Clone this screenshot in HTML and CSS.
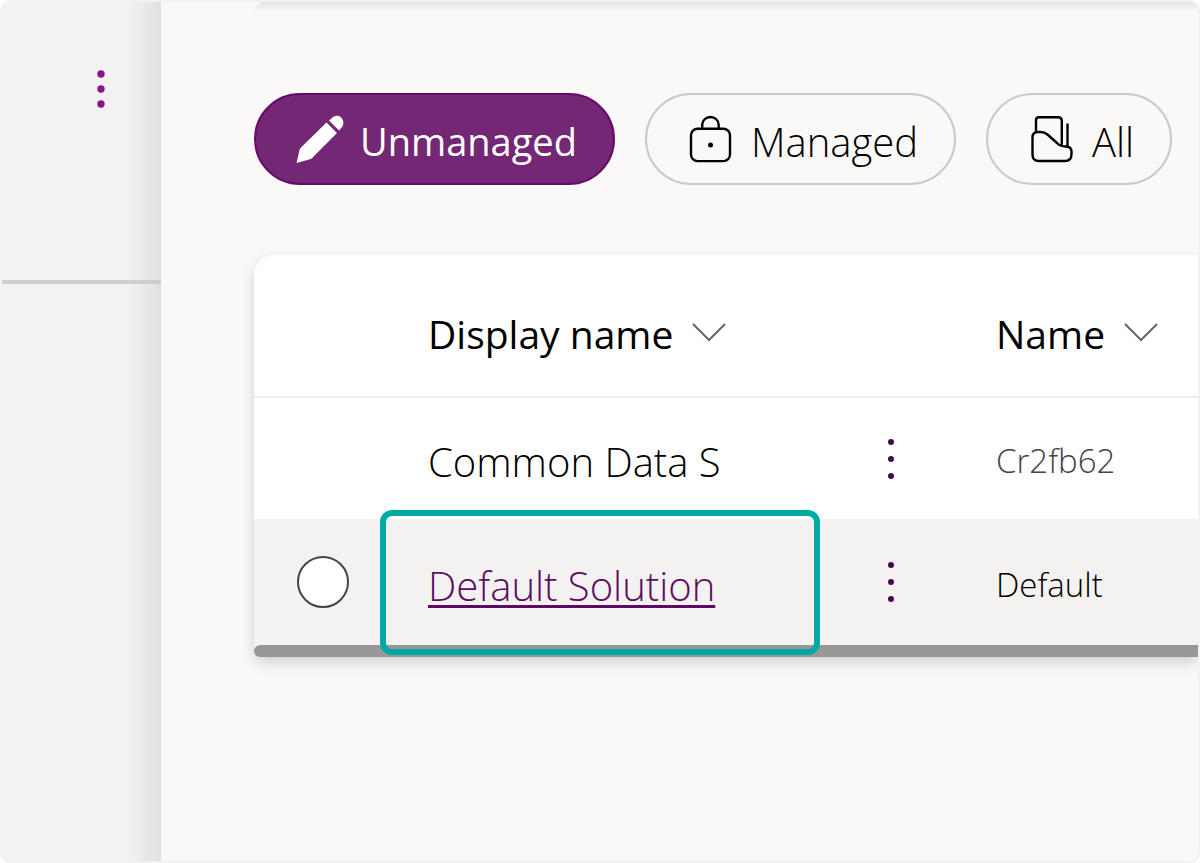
FILE: index.html
```html
<!DOCTYPE html>
<html lang="en">
<head>
<meta charset="utf-8">
<meta name="viewport" content="width=device-width, initial-scale=1">
<title>Solutions</title>
<link rel="stylesheet" href="styles.css">
</head>
<body>
<div class="frame">
  <aside class="sidebar">
    <div class="sidebar-top">
      <button class="icon-button sidebar-more" type="button" aria-label="More">
        <svg class="dots-icon" width="8" height="38" viewBox="0 0 8 38"><circle cx="4" cy="4" r="3.700"/><circle cx="4" cy="19" r="3.700"/><circle cx="4" cy="34" r="3.700"/></svg>
      </button>
    </div>
  </aside>
  <main class="content">
    <div class="toolbar-shadow"></div>
    <div class="filters">
      <button class="pill pill-active" type="button" aria-pressed="true">
        <svg class="pill-icon" width="48" height="48" viewBox="0 0 48 48" fill="#fff"><path d="M35.500 3.500C38 .300 42.500 0 45.200 2.600C48 5.400 48.200 10 45.300 13L43 15.500L33 5.500Z"/><path d="M30.500 7.500L41 18L19 40C17.500 41.500 16.500 43.500 14 44.300L.500 48L3.500 35C4 33.500 5 32.500 6 31.500Z"/></svg>
        <span class="pill-label">Unmanaged</span>
      </button>
      <button class="pill" type="button" aria-pressed="false">
        <svg class="pill-icon" width="48" height="48" viewBox="0 0 48 48" fill="none" stroke="#000" stroke-width="2.400"><rect x="4" y="13.800" width="39" height="32.300" rx="6.500"/><path d="M15.200 13.800V9.800A8.200 7.800 0 0 1 31.700 9.800V13.800"/><circle cx="23.500" cy="30" r="2.500" fill="#000" stroke="none"/></svg>
        <span class="pill-label">Managed</span>
      </button>
      <button class="pill" type="button" aria-pressed="false">
        <svg class="pill-icon" width="48" height="48" viewBox="0 0 48 48" fill="none" stroke="#000" stroke-width="2.400" stroke-linejoin="round"><path d="M8 17V5Q8 2.300 11 2.300H30Q33.800 2.300 33.800 6V31"/><path d="M39.500 8.500V31.500"/><path d="M4.500 22.500Q4.500 17 10 17H12.500Q16.500 17 19.500 19.500L29 28Q32.500 31.500 37.500 31.500Q43.500 31.500 43.500 36.500V39Q43.500 46 37 46H11Q4.500 46 4.500 39.500Z"/></svg>
        <span class="pill-label">All</span>
      </button>
    </div>
    <section class="card">
      <table class="solutions">
        <colgroup><col class="col-select"><col class="col-display"><col class="col-more"><col></colgroup>
        <thead>
          <tr>
            <td></td>
            <th scope="col"><button class="sort" type="button">Display name<svg width="34" height="28" viewBox="0 0 34 28"><path d="M1 4L17 20L33 4"/></svg></button></th>
            <td></td>
            <th class="name-cell" scope="col"><button class="sort" type="button">Name<svg width="34" height="28" viewBox="0 0 34 28"><path d="M1 4L17 20L33 4"/></svg></button></th>
          </tr>
        </thead>
        <tbody>
          <tr class="row">
            <td></td>
            <td class="display-name">Common Data S</td>
            <td class="more-cell"><button class="icon-button" type="button" aria-label="More commands"><svg class="dots-icon" width="8" height="42" viewBox="0 0 8 42"><circle cx="4" cy="4" r="3"/><circle cx="4" cy="21" r="3"/><circle cx="4" cy="38" r="3"/></svg></button></td>
            <td class="name-cell muted">Cr2fb62</td>
          </tr>
          <tr class="row row-hover">
            <td class="select-cell"><input class="radio" type="radio" name="solution" aria-label="Select Default Solution"></td>
            <td class="display-name highlighted"><a class="solution-link" href="#default">Default Solution</a><span class="highlight"></span></td>
            <td class="more-cell"><button class="icon-button" type="button" aria-label="More commands"><svg class="dots-icon" width="8" height="42" viewBox="0 0 8 42"><circle cx="4" cy="4" r="3"/><circle cx="4" cy="21" r="3"/><circle cx="4" cy="38" r="3"/></svg></button></td>
            <td class="name-cell">Default</td>
          </tr>
        </tbody>
      </table>
      <div class="scrollbar"></div>
    </section>
  </main>
</div>
</body>
</html>
```

FILE: styles.css
```css
* { box-sizing: border-box; }

body {
  margin: 0;
  background: #fff;
  color: #000;
  font-family: "Open Sans", "Noto Sans", sans-serif;
  font-size: 39px;
}

button { font: inherit; color: inherit; cursor: pointer; }

.frame {
  display: flex;
  min-height: 100vh;
  border: 2px solid #f2f1f7;
  border-radius: 10px;
  overflow: hidden;
  background: #faf9f8;
}

.sidebar {
  flex: 0 0 159px;
  background: linear-gradient(to left, #e2e1e0 0, #e5e4e3 8px, #ececea 20px, #f3f2f1 36px);
}

.sidebar-top {
  display: flex;
  justify-content: flex-end;
  height: 282px;
  padding: 68px 56px 0 0;
  border-bottom: 4px solid #cfcecd;
}

.icon-button {
  display: flex;
  padding: 0;
  border: 0;
  background: none;
}

.dots-icon { display: block; fill: #420a4c; }
.sidebar-more { align-self: flex-start; }
.sidebar-more .dots-icon { fill: #881586; }

.content { flex: 1; min-width: 0; padding-left: 93px; }

.toolbar-shadow {
  height: 10px;
  border-top-left-radius: 10px;
  background: linear-gradient(#e4e3e2, #faf9f8);
}

.filters {
  display: flex;
  gap: 30px;
  padding: 81px 24px 70px 0;
}

.pill {
  display: flex;
  align-items: center;
  gap: 16px;
  height: 92px;
  padding: 0 36px 0 40px;
  border: 2px solid #cacaca;
  border-radius: 46px;
  background: none;
  font-size: 40px;
  font-weight: 300;
  white-space: nowrap;
}

.pill-active {
  border-color: #69096a;
  background: #742774;
  color: #fff;
  font-size: 38px;
  font-weight: 400;
}

.pill-icon { flex: none; }
.pill-label { padding-top: 4px; }

.card {
  border-radius: 20px 0 0 8px;
  background: #fff;
  box-shadow: 0 6px 14px rgba(0, 0, 0, 0.16);
}

.solutions {
  width: 100%;
  table-layout: fixed;
  border-collapse: collapse;
}

.col-select { width: 174px; }
.col-display { width: 392px; }
.col-more { width: 142px; }

td, th { padding: 0; text-align: left; }

thead tr { height: 142px; border-bottom: 2px solid #ededed; }
th { padding-top: 16px; font-weight: 400; white-space: nowrap; }

.sort {
  display: flex;
  align-items: center;
  gap: 19px;
  padding: 0;
  border: 0;
  background: none;
}

.sort svg { fill: none; stroke: #666; stroke-width: 2; }

.row { height: 122px; font-weight: 300; }
.row td { padding-top: 4px; }
.row-hover { height: 126px; background: #f3f2f1; }
.row .display-name { padding-top: 6px; font-size: 40px; }

.row .more-cell { padding-top: 0; }
.more-cell .icon-button { margin: 0 auto; }

.solutions .name-cell { padding-left: 34px; }
.row .name-cell { font-size: 33px; }
.muted { color: #444; }

.row .select-cell { padding: 0 0 0 43px; }

.radio {
  display: block;
  appearance: none;
  width: 52px;
  height: 52px;
  margin: 0;
  border: 2px solid #484644;
  border-radius: 50%;
  background: #fff;
}

.highlighted { position: relative; }

.highlight {
  position: absolute;
  inset: -9px 0 -10px -48px;
  border: 6px solid #00a8a6;
  border-radius: 12px;
  pointer-events: none;
}

.solution-link {
  color: #5c0a62;
  text-decoration: underline;
  text-decoration-thickness: 3px;
  text-underline-offset: 4px;
}

.scrollbar {
  height: 12px;
  border-radius: 6px 0 0 6px;
  background: #979797;
}
```
